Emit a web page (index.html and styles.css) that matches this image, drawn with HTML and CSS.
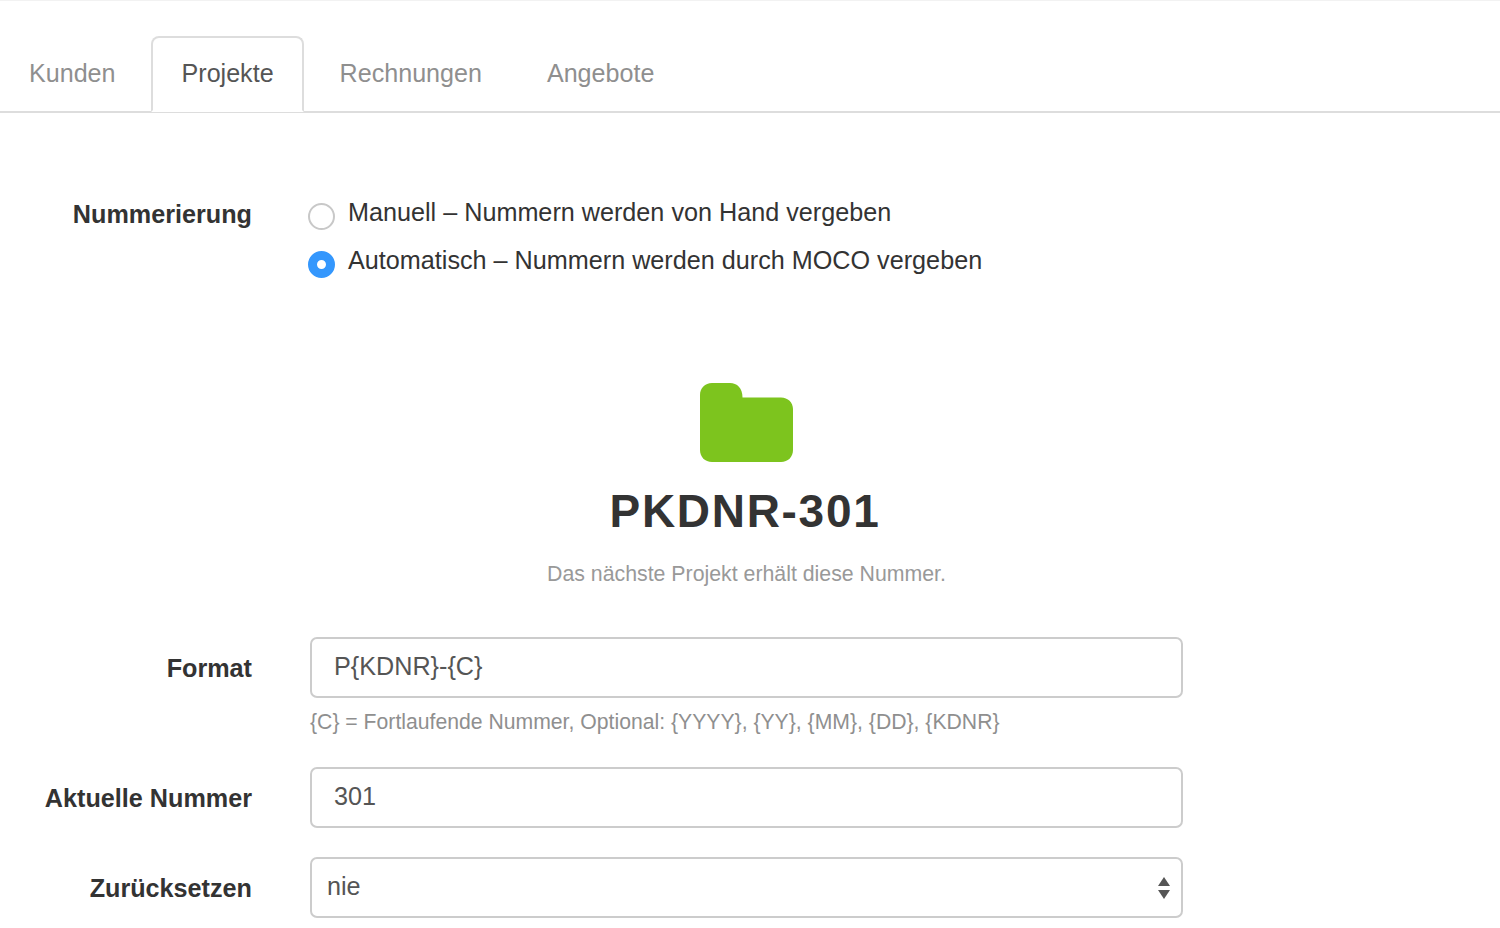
FILE: index.html
```html
<!DOCTYPE html>
<html lang="de">
<head>
<meta charset="utf-8">
<title>Nummerierung</title>
<link rel="stylesheet" href="styles.css">
</head>
<body>
<nav class="tabs">
  <a class="tab">Kunden</a>
  <a class="tab active">Projekte</a>
  <a class="tab">Rechnungen</a>
  <a class="tab">Angebote</a>
</nav>
<main class="form">
  <section class="row row-radio">
    <div class="label">Nummerierung</div>
    <div class="radios">
      <div class="radio-line"><span class="radio"></span><span>Manuell – Nummern werden von Hand vergeben</span></div>
      <div class="radio-line"><span class="radio checked"></span><span>Automatisch – Nummern werden durch MOCO vergeben</span></div>
    </div>
  </section>
  <section class="preview">
    <svg class="folder" width="93" height="79" viewBox="0 0 93 79" aria-hidden="true">
      <path fill="#7dc41e" d="M12 0H30C37 0 42.500 5 42.500 14.500H81C88 14.500 93 19.500 93 26V67C93 74 88 79 81 79H12C5 79 0 74 0 67V12C0 5 5 0 12 0Z"/>
    </svg>
    <div class="number">PKDNR-301</div>
    <p class="note">Das nächste Projekt erhält diese Nummer.</p>
  </section>
  <section class="row row-format">
    <div class="label">Format</div>
    <div class="field">
      <div class="input">P{KDNR}-{C}</div>
      <p class="hint">{C} = Fortlaufende Nummer, Optional: {YYYY}, {YY}, {MM}, {DD}, {KDNR}</p>
    </div>
  </section>
  <section class="row row-current">
    <div class="label">Aktuelle Nummer</div>
    <div class="field"><div class="input">301</div></div>
  </section>
  <section class="row row-reset">
    <div class="label">Zurücksetzen</div>
    <div class="field">
      <div class="input select">
        <span>nie</span>
        <svg class="arrows" width="12" height="22" viewBox="0 0 12 22" aria-hidden="true">
          <path fill="#555" d="M6 0L12 9H0Z"/>
          <path fill="#555" d="M0 13H12L6 22Z"/>
        </svg>
      </div>
    </div>
  </section>
</main>
</body>
</html>
```
FILE: styles.css
```css
* { box-sizing: border-box; }
html, body { margin: 0; height: 928px; overflow: hidden; }
body {
  background: #fff;
  color: #333;
  font-family: "Liberation Sans", Arial, sans-serif;
  font-size: 25.2px;
  border-top: 1px solid #f2f2f2;
}
.tabs {
  display: flex;
  gap: 4px;
  padding: 35px 0 0;
  margin: 0;
  height: 112px;
  border-bottom: 2px solid #ddd;
}
.tab {
  height: 76px;
  padding: 0 28px 0 29px;
  border: 2px solid transparent;
  border-radius: 8px 8px 0 0;
  font-size: 25.100px;
  line-height: 70px;
  color: #8f8f8f;
}
.tab:first-child { margin-left: -2px; }
.tab.active {
  margin: 0 1px;
  color: #555;
  background: #fff;
  border-color: #ddd #ddd #fff;
}
.form { display: block; }
.row { display: flex; align-items: flex-start; }
.label {
  width: 252px;
  flex: none;
  text-align: right;
  font-weight: 700;
  color: #333;
}
.row-radio { padding-top: 83px; }
.row-radio .label { line-height: 36px; }
.radios {
  margin-left: 56px;
  display: flex;
  flex-direction: column;
  gap: 12px;
}
.radio-line {
  display: flex;
  align-items: flex-start;
  gap: 13px;
  line-height: 32px;
  height: 36px;
  color: #333;
}
.radio {
  flex: none;
  width: 27px;
  height: 27px;
  margin-top: 7px;
  border-radius: 50%;
  border: 2px solid #c8c8c8;
  background: #fff;
}
.radio.checked {
  border: 9px solid #3497fd;
  background: #fff;
}
.preview {
  display: flex;
  flex-direction: column;
  align-items: center;
  width: 873px;
  margin-left: 310px;
  padding-top: 103px;
}
.folder { display: block; }
.number {
  margin-top: 21px;
  padding-right: 3px;
  font-size: 46px;
  line-height: 56px;
  font-weight: 700;
  letter-spacing: 1.700px;
  color: #333;
}
.note {
  margin: 20px 0 0;
  font-size: 21.300px;
  line-height: 30px;
  color: #999;
}
.row-format { margin-top: 48px; }
.row-format .label, .row-current .label, .row-reset .label { line-height: 62px; }
.field { margin-left: 58px; width: 873px; }
.input {
  height: 61px;
  padding: 0 22px;
  border: 2px solid #ccc;
  border-radius: 7px;
  line-height: 55px;
  color: #555;
  background: #fff;
}
.hint {
  margin: 9px 0 0;
  font-size: 21.200px;
  line-height: 30px;
  color: #8f8f8f;
  white-space: nowrap;
}
.row-current { margin-top: 30px; }
.row-reset { margin-top: 28px; }
.select {
  display: flex;
  align-items: center;
  justify-content: space-between;
  padding: 0 11px 0 15px;
}
.select span { position: relative; top: -1px; }
.arrows { display: block; }
```
